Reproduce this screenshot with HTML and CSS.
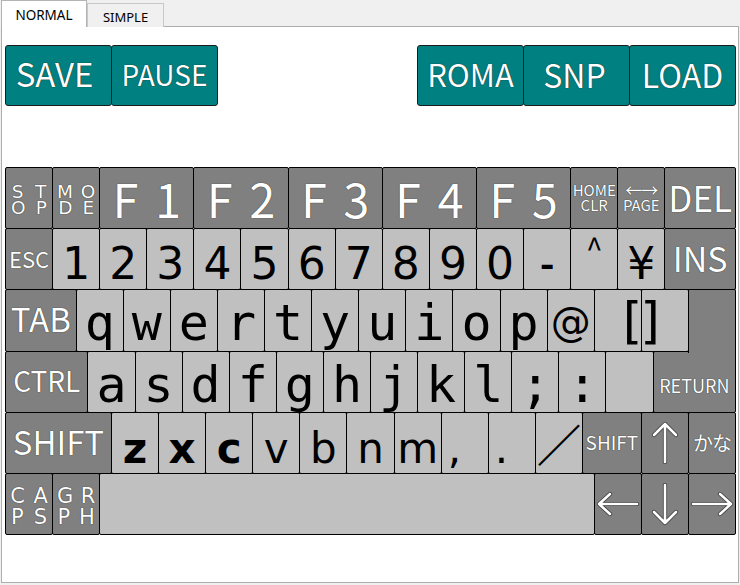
FILE: index.html
```html
<!DOCTYPE html>
<html lang="ja">
<head>
<meta charset="utf-8">
<title>Keyboard</title>
<link rel="stylesheet" href="styles.css">
</head>
<body>
<div class="app">
  <div class="tabs">
    <div class="tab active">NORMAL</div>
    <div class="tab">SIMPLE</div>
  </div>
  <div class="panel">
    <div class="toolbar">
      <div class="btn-group">
        <div class="btn t33 save">SAVE</div>
        <div class="btn t28">PAUSE</div>
      </div>
      <div class="btn-group">
        <div class="btn t31">ROMA</div>
        <div class="btn t32 snp">SNP</div>
        <div class="btn t32">LOAD</div>
      </div>
    </div>

    <div class="keyboard">
      <!-- row 1 -->
      <div class="key dark u4 stack sm"><div class="pair"><span>S</span><span>T</span></div><div class="pair"><span>O</span><span>P</span></div></div>
      <div class="key dark u4 stack sm"><div class="pair"><span>M</span><span>O</span></div><div class="pair"><span>D</span><span>E</span></div></div>
      <div class="key dark u8 fn">F 1</div>
      <div class="key dark u8 fn">F 2</div>
      <div class="key dark u8 fn">F 3</div>
      <div class="key dark u8 fn">F 4</div>
      <div class="key dark u8 fn">F 5</div>
      <div class="key dark u4 twoline"><span>HOME</span><span>CLR</span></div>
      <div class="key dark u4 twoline"><span class="dbl">←→</span><span>PAGE</span></div>
      <div class="key dark u6 cap t35">DEL</div>

      <!-- row 2 -->
      <div class="key dark u4 cap t22">ESC</div>
      <div class="key light u4 num">1</div>
      <div class="key light u4 num">2</div>
      <div class="key light u4 num">3</div>
      <div class="key light u4 num">4</div>
      <div class="key light u4 num">5</div>
      <div class="key light u4 num">6</div>
      <div class="key light u4 num">7</div>
      <div class="key light u4 num">8</div>
      <div class="key light u4 num">9</div>
      <div class="key light u4 num">0</div>
      <div class="key light u4 minus">-</div>
      <div class="key light u4 caret">^</div>
      <div class="key light u4 num">¥</div>
      <div class="key dark u6 cap t34">INS</div>

      <!-- row 3 -->
      <div class="key dark u6 cap t33">TAB</div>
      <div class="key light u4 mono">q</div>
      <div class="key light u4 mono">w</div>
      <div class="key light u4 mono">e</div>
      <div class="key light u4 mono">r</div>
      <div class="key light u4 mono">t</div>
      <div class="key light u4 mono">y</div>
      <div class="key light u4 mono">u</div>
      <div class="key light u4 mono">i</div>
      <div class="key light u4 mono">o</div>
      <div class="key light u4 mono">p</div>
      <div class="key light u4 at">@</div>
      <div class="key light u4 mono br-l"><span>[</span></div>
      <div class="key light u4 mono br-r"><span>]</span></div>
      <div class="key dark u4 ret-top"></div>

      <!-- row 4 -->
      <div class="key dark u7 cap t28">CTRL</div>
      <div class="key light u4 mono">a</div>
      <div class="key light u4 mono">s</div>
      <div class="key light u4 mono">d</div>
      <div class="key light u4 mono">f</div>
      <div class="key light u4 mono">g</div>
      <div class="key light u4 mono">h</div>
      <div class="key light u4 mono">j</div>
      <div class="key light u4 mono">k</div>
      <div class="key light u4 mono">l</div>
      <div class="key light u4 mono">;</div>
      <div class="key light u4 mono">:</div>
      <div class="key light u4"></div>
      <div class="key dark u7 cap t18 ret-bottom">RETURN</div>

      <!-- row 5 -->
      <div class="key dark u9 cap t33">SHIFT</div>
      <div class="key light u4 sans bold">z</div>
      <div class="key light u4 sans bold">x</div>
      <div class="key light u4 sans bold">c</div>
      <div class="key light u4 sans">v</div>
      <div class="key light u4 sans">b</div>
      <div class="key light u4 sans">n</div>
      <div class="key light u4 sans">m</div>
      <div class="key light u4 sans punct">,</div>
      <div class="key light u4 sans punct">.</div>
      <div class="key light u4 slash">／</div>
      <div class="key dark u5 cap t19">SHIFT</div>
      <div class="key dark u4 arrow">
        <svg viewBox="0 0 40 40" width="40" height="40"><path class="ao" d="M20 1 V39 M9 12 L20 1 L31 12"/><path class="ai" d="M20 1 V39 M9 12 L20 1 L31 12"/></svg>
      </div>
      <div class="key dark u4 kana">かな</div>

      <!-- row 6 -->
      <div class="key dark u4 stack lg"><div class="pair"><span>C</span><span>A</span></div><div class="pair"><span>P</span><span>S</span></div></div>
      <div class="key dark u4 stack lg"><div class="pair"><span>G</span><span>R</span></div><div class="pair"><span>P</span><span>H</span></div></div>
      <div class="key light u42"></div>
      <div class="key dark u4 arrow">
        <svg viewBox="0 0 40 40" width="40" height="40"><path class="ao" d="M1 20 H39 M12 10 L1 20 L12 30"/><path class="ai" d="M1 20 H39 M12 10 L1 20 L12 30"/></svg>
      </div>
      <div class="key dark u4 arrow">
        <svg viewBox="0 0 40 40" width="40" height="40"><path class="ao" d="M20 1 V39 M9 28 L20 39 L31 28"/><path class="ai" d="M20 1 V39 M9 28 L20 39 L31 28"/></svg>
      </div>
      <div class="key dark u4 arrow">
        <svg viewBox="0 0 40 40" width="40" height="40"><path class="ao" d="M1 20 H39 M28 10 L39 20 L28 30"/><path class="ai" d="M1 20 H39 M28 10 L39 20 L28 30"/></svg>
      </div>
    </div>
  </div>
</div>
</body>
</html>
```

FILE: styles.css
```css
html, body {
  margin: 0;
  padding: 0;
}
body {
  width: 740px;
  height: 585px;
  overflow: hidden;
  background: #f0f0f0;
  font-family: "Noto Sans CJK JP", "Noto Sans", sans-serif;
}
.app {
  margin-left: 1px;
  width: 738px;
}

/* tabs */
.tabs {
  display: flex;
  align-items: flex-end;
  height: 27px;
  position: relative;
  z-index: 1;
}
.tab {
  box-sizing: border-box;
  height: 24px;
  width: 77px;
  border: 1px solid #c8c8c8;
  border-bottom: none;
  background: #f0f0f0;
  font-family: "Noto Sans", sans-serif;
  font-size: 13px;
  color: #000;
  display: flex;
  align-items: center;
  justify-content: center;
  padding-top: 3px;
}
.tab.active {
  height: 27px;
  width: 86px;
  background: #fff;
  border-color: #b4b4b4;
  font-size: 13.5px;
  padding-top: 2px;
}

/* panel */
.panel {
  box-sizing: border-box;
  margin-top: -1px;
  height: 557px;
  border: 1px solid #adadad;
  background: #fff;
  padding: 0 2px 0 3px;
}

.toolbar {
  display: flex;
  justify-content: space-between;
  width: 731px;
  margin-top: 18px;
}
.btn-group {
  display: flex;
}
.btn {
  box-sizing: border-box;
  width: 107px;
  height: 61px;
  border: 1px solid #1c1c1c;
  border-radius: 3px;
  background: #008080;
  color: #fff;
  display: flex;
  align-items: center;
  justify-content: center;
  line-height: 1;
  padding-bottom: 4px;
  text-shadow: 0 0 1px #000;
}
.btn + .btn {
  margin-left: -1px;
}
.btn.save {
  padding-right: 8px;
}
.btn.snp {
  padding-right: 4px;
}

/* keyboard */
.keyboard {
  box-sizing: border-box;
  margin-top: 61px;
  width: 731px;
  height: 368px;
  padding: 0 1px 1px 0;
  display: grid;
  grid-template-columns: repeat(62, 1fr);
  grid-template-rows: repeat(6, 1fr);
}
.key {
  box-sizing: border-box;
  margin: 0 -1px -1px 0;
  border: 1px solid #000;
  border-radius: 2px;
  display: flex;
  align-items: center;
  justify-content: center;
  min-width: 0;
  min-height: 0;
  overflow: hidden;
  line-height: 1.25;
  white-space: nowrap;
}
.u4 { grid-column: span 4; }
.u5 { grid-column: span 5; }
.u6 { grid-column: span 6; }
.u7 { grid-column: span 7; }
.u8 { grid-column: span 8; }
.u9 { grid-column: span 9; }
.u42 { grid-column: span 42; }

.dark {
  background: #808080;
  color: #fff;
  text-shadow: 0 0 1px #000;
}
.light {
  background: #c0c0c0;
  color: #000;
}

.cap {
  font-family: "Noto Sans CJK JP", sans-serif;
  line-height: 1;
  padding-bottom: 3px;
}
.t18 { font-size: 18px; }
.t19 { font-size: 19px; }
.t22 { font-size: 22px; }
.t28 { font-size: 28px; }
.t31 { font-size: 31px; }
.t32 { font-size: 32px; }
.t33 { font-size: 33px; }
.t34 { font-size: 34px; }
.t35 { font-size: 35px; }

.fn {
  font-size: 47px;
  line-height: 1;
  word-spacing: 6px;
  padding-bottom: 2px;
}

.stack {
  flex-direction: column;
  align-items: stretch;
  font-family: "DejaVu Sans", sans-serif;
}
.pair {
  display: flex;
  justify-content: space-around;
}
.stack.sm { font-size: 18.5px; padding-top: 3px; }
.stack.sm .pair { line-height: 15.5px; }
.stack.lg { font-size: 21px; padding-top: 7px; }
.stack.lg .pair { line-height: 21px; }

.twoline {
  flex-direction: column;
  font-size: 15px;
  padding-bottom: 2px;
}
.twoline span {
  line-height: 15px;
}
.twoline .dbl {
  font-size: 17px;
  letter-spacing: -1px;
}

.num {
  font-family: "DejaVu Sans", sans-serif;
  font-size: 44px;
  line-height: 1;
  padding-top: 10px;
}
.minus {
  font-family: "Noto Sans CJK JP", sans-serif;
  font-weight: 700;
  font-size: 40px;
  line-height: 1;
  padding-top: 4px;
}
.caret {
  font-family: "Noto Sans CJK JP", sans-serif;
  font-size: 30px;
  line-height: 1;
  padding-bottom: 24px;
}
.mono {
  font-family: "DejaVu Sans Mono", monospace;
  font-size: 50px;
  line-height: 1;
  padding-top: 6px;
}
.at {
  font-family: "DejaVu Sans", sans-serif;
  font-size: 40px;
  line-height: 1;
  padding-top: 4px;
}
.br-l {
  justify-content: flex-end;
  padding-top: 2px;
}
.br-l span {
  margin-right: -5px;
}
.br-r {
  justify-content: flex-start;
  padding-top: 2px;
}
.br-r span {
  margin-left: -5px;
}
.sans {
  font-family: "DejaVu Sans", sans-serif;
  font-size: 42px;
  line-height: 1;
  padding-top: 12px;
}
.bold { font-weight: 700; }
.punct {
  justify-content: flex-start;
  padding-left: 6px;
}
.slash {
  font-family: "Noto Sans CJK JP", sans-serif;
  font-weight: 700;
  font-size: 44px;
  line-height: 1;
}
.kana {
  font-family: "Noto Sans CJK JP", sans-serif;
  font-size: 20px;
  line-height: 1;
  letter-spacing: -1px;
}
.ret-top {
  border-bottom: none;
  margin-bottom: -2px;
  border-bottom-left-radius: 0;
  border-bottom-right-radius: 0;
  z-index: 1;
}
.ret-bottom {
  border-top-right-radius: 0;
  padding-top: 10px;
}

.arrow svg {
  display: block;
  overflow: visible;
}
.arrow .ao {
  fill: none;
  stroke: #3a3a3a;
  stroke-width: 4.2;
  stroke-linecap: round;
  stroke-linejoin: round;
}
.arrow .ai {
  fill: none;
  stroke: #fff;
  stroke-width: 2.6;
  stroke-linecap: round;
  stroke-linejoin: round;
}
```
